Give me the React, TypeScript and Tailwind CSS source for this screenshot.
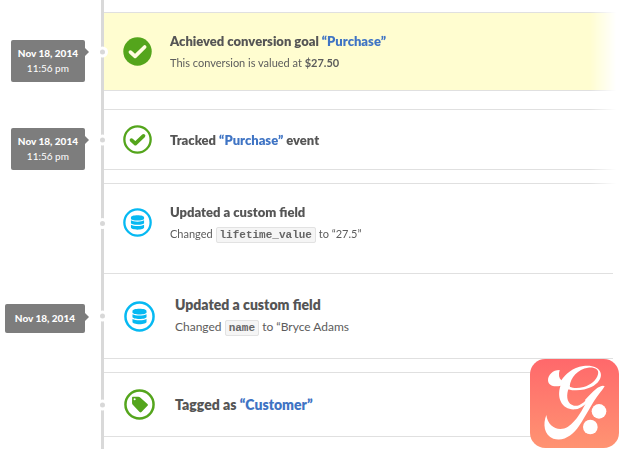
import type { ReactNode } from 'react';
import clsx from 'clsx';

type IconKind = 'goal' | 'event' | 'field' | 'tag';

interface Entry {
  id: string;
  icon: IconKind;
  date?: string;
  time?: string;
  title: ReactNode;
  detail?: ReactNode;
  large?: boolean;
  rowClass: string;
  cardClass: string;
}

const fade = '[mask-image:linear-gradient(to_right,black_calc(100%_-_30px),transparent_calc(100%_-_4px))]';

function Keyword({ children }: { children: ReactNode }) {
  return (
    <code className="rounded-xs border border-[#e2e2e2] bg-[#f5f5f5] px-[3px] py-px font-['Liberation_Mono',monospace] text-[11px] font-bold text-[#666]">
      {children}
    </code>
  );
}

function Highlight({ children }: { children: ReactNode }) {
  return (
    <a href="#" className="text-[#3f74c4]">
      {children}
    </a>
  );
}

const entries: Entry[] = [
  {
    id: 'goal',
    icon: 'goal',
    date: 'Nov 18, 2014',
    time: '11:56 pm',
    title: <>Achieved conversion goal <Highlight>“Purchase”</Highlight></>,
    detail: <>This conversion is valued at <strong>$27.50</strong></>,
    rowClass: 'pb-[18px]',
    cardClass: `min-h-[79px] border-y bg-[#fffdd0] ${fade}`,
  },
  {
    id: 'event',
    icon: 'event',
    date: 'Nov 18, 2014',
    time: '11:56 pm',
    title: <>Tracked <Highlight>“Purchase”</Highlight> event</>,
    rowClass: 'pb-[13px]',
    cardClass: `min-h-[60px] border-y ${fade}`,
  },
  {
    id: 'lifetime',
    icon: 'field',
    title: 'Updated a custom field',
    detail: <>Changed <Keyword>lifetime_value</Keyword> to “27.5”</>,
    rowClass: '',
    cardClass: `min-h-[90px] border-t pb-3 ${fade}`,
  },
  {
    id: 'name',
    icon: 'field',
    date: 'Nov 18, 2014',
    title: 'Updated a custom field',
    detail: <>Changed <Keyword>name</Keyword> to “Bryce Adams</>,
    large: true,
    rowClass: 'pb-[13px]',
    cardClass: 'mr-[7px] min-h-[86px] border-y',
  },
  {
    id: 'tag',
    icon: 'tag',
    title: <>Tagged as <Highlight>“Customer”</Highlight></>,
    large: true,
    rowClass: 'pb-3',
    cardClass: 'mr-[7px] min-h-[65px] border-y',
  },
];

function EntryIcon({ kind, large }: { kind: IconKind; large?: boolean }) {
  const color = kind === 'field' ? '#06b9f2' : '#54a51c';
  return (
    <svg viewBox="0 0 30 30" className={clsx('shrink-0', large ? 'size-[31px]' : 'size-[29px]')} aria-hidden="true">
      {kind === 'goal' ? (
        <circle cx="15" cy="15" r="14.7" fill={color} />
      ) : (
        <circle cx="15" cy="15" r="13.6" fill="#fff" stroke={color} strokeWidth="2.4" />
      )}
      {kind === 'goal' && (
        <path d="M7.7 15.6l4.8 4.4 9.9-9.6" fill="none" stroke="#fffde0" strokeWidth="3.8" strokeLinecap="round" strokeLinejoin="round" />
      )}
      {kind === 'event' && (
        <path d="M8.8 15.6l4 3.7 8.4-8.1" fill="none" stroke={color} strokeWidth="3.8" strokeLinecap="round" strokeLinejoin="round" />
      )}
      {kind === 'field' && (
        <g fill={color}>
          <path d="M8.2 9.6c0-1.2 3-2.1 6.8-2.1s6.8.9 6.8 2.1v1.5c0 1.1-3 1.9-6.8 1.9s-6.8-.8-6.8-1.9z" />
          <path d="M8.2 12.8c1.4.9 4 1.3 6.8 1.3s5.4-.4 6.8-1.3v2.7c0 1.1-3 1.9-6.8 1.9s-6.8-.8-6.8-1.9z" />
          <path d="M8.2 17.3c1.4.9 4 1.3 6.8 1.3s5.4-.4 6.8-1.3v3c0 1.2-3 2.1-6.8 2.1s-6.8-.9-6.8-2.1z" />
        </g>
      )}
      {kind === 'tag' && (
        <path
          fill={color}
          fillRule="evenodd"
          d="M7.8 8.4c0-.7.4-1 1-1h5.1c.6 0 1 .2 1.5.6l7.3 6.5c.6.6.6 1.2 0 1.8l-5.800 5.900c-.6.6-1.200.6-1.800 0l-6.600-7c-.5-.5-.7-1-.7-1.700zM10.300 8.900a1 1 0 1 0 0 2a1 1 0 1 0 0-2z"
        />
      )}
    </svg>
  );
}

function DateBadge({ date, time }: { date: string; time?: string }) {
  return (
    <time
      className={clsx(
        'relative rounded-xs bg-[#7d7d7d] text-center text-[10px] leading-[15px] text-white',
        time ? 'px-[7px] py-[6px]' : 'px-[10px] py-[7px]',
      )}
    >
      <span className="block font-black">{date}</span>
      {time && <span className="block">{time}</span>}
      <span
        className={clsx(
          'absolute left-full border-y-4 border-l-4 border-y-transparent border-l-[#7d7d7d]',
          time ? 'top-2' : 'top-[9px]',
        )}
      />
    </time>
  );
}

function TimelineRow({ entry }: { entry: Entry }) {
  const { icon, date, time, title, detail, large, rowClass, cardClass } = entry;
  return (
    <li className={clsx('flex', rowClass)}>
      <div className={clsx('relative z-10 flex w-[104px] shrink-0 items-center justify-end pr-[19px]', time ? 'pt-[19px]' : 'pt-1')}>
        {date && <DateBadge date={date} time={time} />}
        <span
          className={clsx(
            'absolute -right-1 size-[11px] rounded-full border-3 border-white bg-[#d8d8d8]',
            icon === 'field' && !large ? 'top-[35px]' : 'top-1/2 -translate-y-1/2',
          )}
        />
      </div>
      <div
        className={clsx(
          'flex min-w-0 grow items-center border-[#e0e0e0]',
          large ? 'gap-5 pl-5' : 'gap-[18px] pl-[19px]',
          cardClass,
        )}
      >
        <EntryIcon kind={icon} large={large} />
        <div>
          <h3 className={clsx('font-extrabold leading-5 text-[#555]', large ? 'text-[14px]' : 'text-[13px]')}>{title}</h3>
          {detail && (
            <p className={clsx('mt-[3px] leading-[18px] text-[#5c5c5c]', large ? 'text-[12px]' : 'text-[11px]')}>{detail}</p>
          )}
        </div>
      </div>
    </li>
  );
}

function Logo() {
  return (
    <svg viewBox="30 27 267 267" className="fixed right-px bottom-px z-20 size-[89px]" role="img" aria-label="G logo">
      <defs>
        <linearGradient id="logo" x1="0" y1="0" x2="0" y2="1">
          <stop offset="0" stopColor="#ff686b" />
          <stop offset="1" stopColor="#ff9472" />
        </linearGradient>
      </defs>
      <rect x="30" y="27" width="267" height="267" rx="46" fill="url(#logo)" />
      <g fill="#fff">
        {/* upper loop */}
        <path
          fillRule="evenodd"
          d="M119 60C98 60 84 75 84 91C85 108 103 112 123 107C150 128 190 122 214 111C235 101 246 84 242 69C237 50 213 45 190 48C158 53 136 72 124 91C117 85 115 74 119 60ZM149 110C151 82 174 57 204 53C224 51 238 58 234 73C230 91 211 106 191 111C174 115 160 115 149 110Z"
        />
        {/* bowl */}
        <path d="M124 100C116 120 115 139 122 154C130 172 147 180 166 178C185 175 198 162 209 149L204 144C193 157 178 170 162 167C143 163 138 143 144 121L150 109Z" />
        {/* descender */}
        <path d="M254 109C250 104 238 109 229 116C218 125 204 139 195 150L199 156C188 178 171 212 144 230C116 247 83 230 79 195C68 222 72 256 100 266C132 276 159 254 177 228C199 196 218 156 237 132C244 123 251 115 254 109Z" />
        <circle cx="237" cy="184" r="22" />
        <circle cx="211" cy="231" r="22" />
      </g>
    </svg>
  );
}

export default function App() {
  return (
    <main className="relative min-h-screen overflow-hidden bg-white pt-3 font-[Lato,sans-serif]">
      <div className="absolute inset-y-0 left-[101px] w-[3px] bg-[#d9d9d9]" />
      <ol className="relative">
        {entries.map((entry) => (
          <TimelineRow key={entry.id} entry={entry} />
        ))}
      </ol>
      <Logo />
    </main>
  );
}
